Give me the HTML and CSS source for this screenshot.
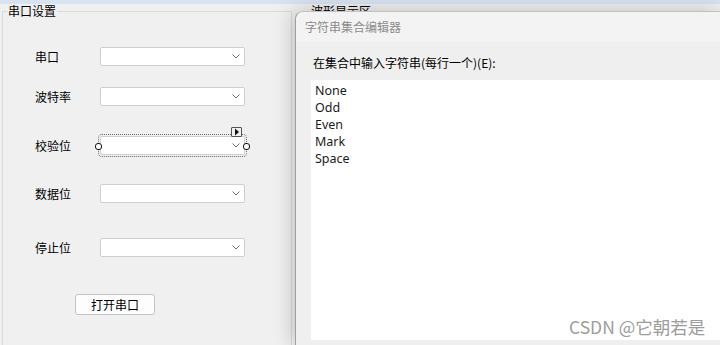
FILE: index.html
```html
<!DOCTYPE html>
<html lang="zh-CN">
<head>
<meta charset="utf-8">
<title>串口设置</title>
<link rel="stylesheet" href="styles.css">
</head>
<body>
<div class="screen">
  <div class="topbar"></div>
  <div class="workspace">
    <fieldset class="group group-serial">
      <legend>串口设置</legend>
      <div class="row r1">
        <span class="lbl">串口</span>
        <div class="combo"><svg class="chev" width="8" height="5" viewBox="0 0 8 5"><polyline points="0.5,0.5 4,4 7.5,0.5" fill="none" stroke="#707070" stroke-width="1"/></svg></div>
      </div>
      <div class="row r2">
        <span class="lbl">波特率</span>
        <div class="combo"><svg class="chev" width="8" height="5" viewBox="0 0 8 5"><polyline points="0.5,0.5 4,4 7.5,0.5" fill="none" stroke="#707070" stroke-width="1"/></svg></div>
      </div>
      <div class="row r3">
        <span class="lbl">校验位</span>
        <div class="combo selected"><svg class="chev" width="8" height="5" viewBox="0 0 8 5"><polyline points="0.5,0.5 4,4 7.5,0.5" fill="none" stroke="#707070" stroke-width="1"/></svg>
          <span class="handle handle-left"></span>
          <span class="handle handle-right"></span>
          <span class="smarttag"><svg width="8" height="8" viewBox="0 0 8 8"><polygon points="2,0.5 6,4 2,7.5" fill="#111"/></svg></span>
        </div>
      </div>
      <div class="row r4">
        <span class="lbl">数据位</span>
        <div class="combo"><svg class="chev" width="8" height="5" viewBox="0 0 8 5"><polyline points="0.5,0.5 4,4 7.5,0.5" fill="none" stroke="#707070" stroke-width="1"/></svg></div>
      </div>
      <div class="row r5">
        <span class="lbl">停止位</span>
        <div class="combo"><svg class="chev" width="8" height="5" viewBox="0 0 8 5"><polyline points="0.5,0.5 4,4 7.5,0.5" fill="none" stroke="#707070" stroke-width="1"/></svg></div>
      </div>
      <button class="btn">打开串口</button>
    </fieldset>
    <fieldset class="group group-wave">
      <legend>波形显示区</legend>
    </fieldset>
  </div>

  <div class="dialog">
    <div class="dialog-title">字符串集合编辑器</div>
    <div class="dialog-body">
      <div class="dialog-label">在集合中输入字符串(每行一个)(E):</div>
      <div class="textbox">
        <div class="item">None</div>
        <div class="item">Odd</div>
        <div class="item">Even</div>
        <div class="item">Mark</div>
        <div class="item">Space</div>
      </div>
    </div>
  </div>
  <div class="watermark">CSDN @它朝若是</div>
</div>
</body>
</html>
```

FILE: styles.css
```css
* { box-sizing: border-box; }
html, body { margin: 0; padding: 0; }
body {
  background: #f0f0f0;
  font-family: "Noto Sans CJK SC", "Noto Sans", sans-serif;
  font-size: 12px;
  color: #000;
}
.screen {
  position: relative;
  width: 720px;
  height: 345px;
  overflow: hidden;
  background: #f0f0f0;
}
.topbar {
  height: 4px;
  background: #d7e3f1;
}
.workspace {
  display: flex;
  align-items: flex-start;
}
.group {
  margin: 0;
  padding: 0;
  min-width: 0;
  border: 1px solid #dadada;
  height: 380px;
}
.group legend {
  padding: 0 1px;
  margin-left: 4px;
  line-height: 14px;
  font-size: 12px;
  height: 14px;
}
.group-serial {
  margin-left: 2px;
  width: 290px;
}
.group-wave {
  margin-left: 13px;
  flex: 1;
}
.row {
  display: flex;
  align-items: center;
  height: 19px;
  padding-left: 32px;
}
.r1 { margin-top: 29px; }
.r2 { margin-top: 21px; }
.r3 { margin-top: 30px; }
.r4 { margin-top: 29px; }
.r5 { margin-top: 35px; }
.lbl {
  width: 65px;
  line-height: 14px;
}
.combo {
  position: relative;
  width: 145px;
  height: 19px;
  background: #fff;
  border: 1px solid #cfcfcf;
  border-radius: 2px;
  display: flex;
  align-items: center;
  justify-content: flex-end;
  padding-right: 4px;
}
.chev { display: block; }
.selected {
  outline: 1px dotted #6a6a6a;
  outline-offset: 1px;
}
.handle {
  position: absolute;
  top: 50%;
  width: 7px;
  height: 7px;
  margin-top: -3px;
  border: 1px solid #111;
  border-radius: 3px;
  background: #fff;
}
.handle-left { left: -6px; }
.handle-right { right: -6px; }
.smarttag {
  position: absolute;
  left: 130px;
  top: -10px;
  width: 11px;
  height: 10px;
  border: 1px solid #555;
  border-radius: 1px;
  background: #f0f0f0;
  display: flex;
  align-items: center;
  justify-content: center;
}
.smarttag svg { display: block; }
.btn {
  display: block;
  margin: 37px 0 0 72px;
  width: 80px;
  height: 21px;
  padding: 0;
  background: #fdfdfd;
  border: 1px solid #c4c4c4;
  border-radius: 3px;
  font-family: "Noto Sans CJK SC", sans-serif;
  font-size: 12px;
  line-height: 18px;
  color: #000;
}
.dialog {
  position: absolute;
  left: 295px;
  top: 11px;
  right: 0;
  bottom: 0;
  background: #efefef;
  border-top: 1px solid #c2c2c2;
  border-left: 1px solid #9e9e9e;
  border-top-left-radius: 8px;
  box-shadow: -3px -1px 20px rgba(0, 0, 0, 0.2);
  display: flex;
  flex-direction: column;
}
.dialog-title {
  height: 30px;
  line-height: 30px;
  padding-left: 9px;
  background: #f3f3f3;
  color: #8b8b8b;
  border-top-left-radius: 8px;
}
.dialog-body {
  flex: 1;
  padding-left: 15px;
  display: flex;
  flex-direction: column;
}
.dialog-label {
  padding: 14px 0 0 2px;
  line-height: 14px;
  height: 38px;
}
.textbox {
  height: 260px;
  background: #fff;
  padding: 2px 0 0 4px;
  font-family: "Noto Sans", sans-serif;
  font-size: 12.5px;
  color: #1a1a1a;
}
.item {
  line-height: 17px;
  height: 17px;
}
.watermark {
  position: absolute;
  left: 569px;
  top: 316px;
  font-family: "Noto Sans CJK SC", sans-serif;
  font-size: 17.5px;
  line-height: 21px;
  color: #9c9c9c;
  white-space: nowrap;
}
```
